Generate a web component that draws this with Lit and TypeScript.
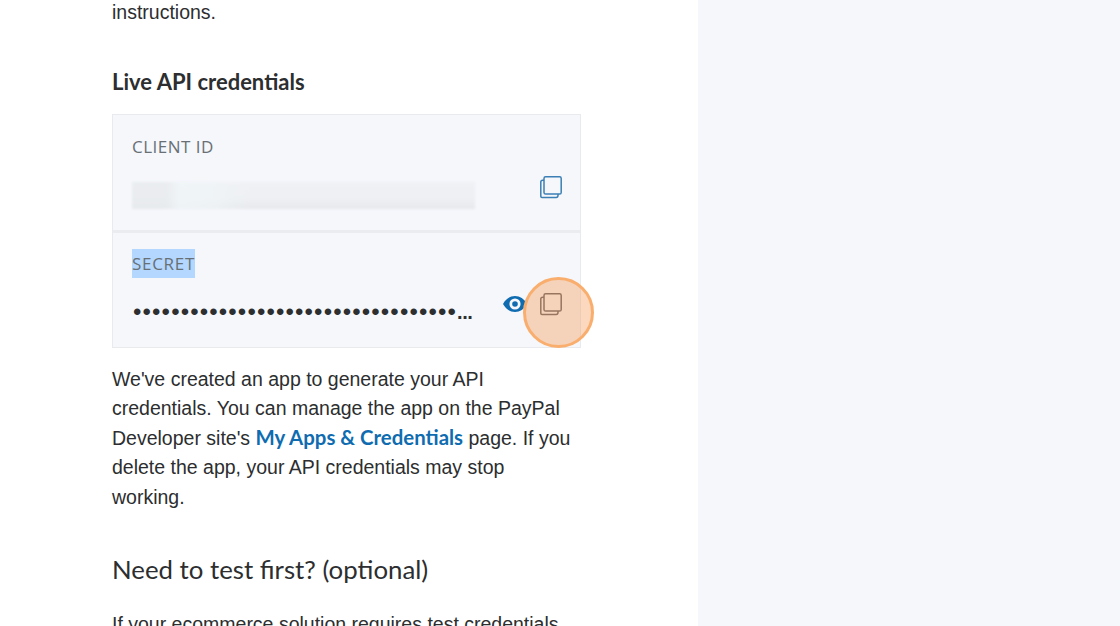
import { LitElement, css, html } from 'lit'
import { customElement } from 'lit/decorators.js'

const copyIcon = html`
  <svg class="copy" viewBox="0 0 24 24" width="24" height="24" fill="none" stroke="currentColor" stroke-width="1.5">
    <rect x="5" y="1.800" width="17.200" height="17.200" rx="1.600"></rect>
    <path d="M5 5.200H3.600A1.800 1.800 0 0 0 1.800 7v14.200A1.200 1.200 0 0 0 3 22.400h14.200a1.800 1.800 0 0 0 1.800-1.800V19"></path>
  </svg>
`

@customElement('app-root')
export class AppRoot extends LitElement {
  protected render() {
    return html`
      <main class="main">
        <p class="copy-text intro">instructions.</p>
        <h3>Live API credentials</h3>
        <div class="creds">
          <section class="cred">
            <div class="label">CLIENT ID</div>
            <div class="row">
              <div class="value"><div class="blurred"></div></div>
              <span class="icons">${copyIcon}</span>
            </div>
          </section>
          <section class="cred second">
            <div class="label"><span class="selected">SECRET</span></div>
            <div class="row">
              <div class="value dots">${'•'.repeat(34)}<span class="more">...</span></div>
              <span class="icons">
                <svg class="eye" viewBox="0 0 26 18" width="26" height="18">
                  <path fill="#0f6cb0" fill-rule="evenodd" d="M1 9C4 3.800 8 1 13 1s9 2.800 12 8c-3 5.200-7 8-12 8S4 14.200 1 9Zm12-5.600a5.600 5.600 0 1 0 0 11.200 5.600 5.600 0 0 0 0-11.200Zm0 2.800a2.800 2.800 0 1 1 0 5.600 2.800 2.800 0 0 1 0-5.600Z"></path>
                </svg>
                ${copyIcon}
              </span>
            </div>
            <div class="pointer"></div>
          </section>
        </div>
        <p class="copy-text after">
          We've created an app to generate your API credentials. You can manage the app on the PayPal
          Developer site's <a href="#">My Apps &amp; Credentials</a> page. If you delete the app, your
          API credentials may stop working.
        </p>
        <h2>Need to test first? (optional)</h2>
        <p class="copy-text">If your ecommerce solution requires test credentials</p>
      </main>
      <aside class="side"></aside>
    `
  }

  static styles = css`
    :host {
      display: flex;
      height: 626px;
      overflow: hidden;
      background: #fff;
      font-family: 'Liberation Sans', Arial, sans-serif;
    }

    .main {
      width: 469px;
      padding: 0 117px 0 112px;
      flex: none;
    }

    .side {
      flex: 1;
      background: #f5f7fb;
    }

    .copy-text {
      margin: 0;
      font-size: 19.500px;
      line-height: 29.500px;
      color: #2c2e2f;
    }

    .intro {
      margin-top: -2px;
    }

    .after {
      margin-top: 17px;
    }

    h3 {
      margin: 37px 0 16px;
      font: 700 22px/33px Lato, sans-serif;
      color: #2c2e2f;
    }

    h2 {
      margin: 39px 0 23px;
      font: 400 25.800px/36px Lato, sans-serif;
      color: #2c2e2f;
    }

    .creds {
      border: 1px solid #e8eaee;
      background: #f5f7fb;
    }

    .cred {
      position: relative;
      height: 115px;
      padding: 0 18px;
      box-sizing: border-box;
    }

    .second {
      border-top: 3px solid #eaecf0;
      height: 117px;
    }

    .label {
      padding-top: 20px;
      padding-left: 1px;
      font: 400 17px/24px 'Open Sans', sans-serif;
      letter-spacing: 0.500px;
      color: #687076;
    }

    .second .label {
      padding-top: 16px;
    }

    .selected {
      display: inline-block;
      background: #b3d7ff;
      padding: 3px 0 2px;
      letter-spacing: 0.700px;
    }

    .row {
      position: relative;
      display: flex;
      align-items: center;
      justify-content: space-between;
      height: 27px;
      margin-top: 23px;
      padding-left: 1px;
    }

    .second .row {
      margin-top: 21px;
    }

    .blurred {
      width: 343px;
      height: 27px;
      filter: blur(1px);
      background:
        linear-gradient(90deg, rgba(232, 235, 238, 0.7) 0%, rgba(232, 235, 238, 0.7) 10%, rgba(240, 246, 248, 0.8) 14%, rgba(240, 246, 248, 0.6) 24%, rgba(245, 247, 251, 0) 34%),
        linear-gradient(180deg, #f0f1f5 0%, #eef0f3 60%, #e7e9ec 100%);
    }

    .dots {
      font: 400 24px/27px 'Liberation Sans', sans-serif;
      letter-spacing: 1.130px;
      color: #2c2e2f;
      white-space: nowrap;
      padding-left: 1px;
    }

    .more {
      font-size: 20px;
      letter-spacing: -0.500px;
      font-weight: 700;
      vertical-align: 1px;
    }

    .icons {
      position: absolute;
      right: -1px;
      top: -7px;
      display: flex;
      align-items: center;
      gap: 11px;
      color: #3b7fb5;
    }

    .second .icons {
      top: -7px;
      color: #5a5a5f;
    }

    .pointer {
      position: absolute;
      left: 410px;
      top: 44px;
      width: 65px;
      height: 65px;
      border-radius: 50%;
      border: 3px solid #f9ae6e;
      background: rgba(246, 158, 92, 0.4);
      pointer-events: none;
    }

    a {
      color: #0f6cb0;
      font-family: Lato, sans-serif;
      font-size: 20.400px;
      font-weight: 700;
      line-height: 1;
      text-decoration: none;
    }
  `
}

declare global {
  interface HTMLElementTagNameMap {
    'app-root': AppRoot
  }
}
